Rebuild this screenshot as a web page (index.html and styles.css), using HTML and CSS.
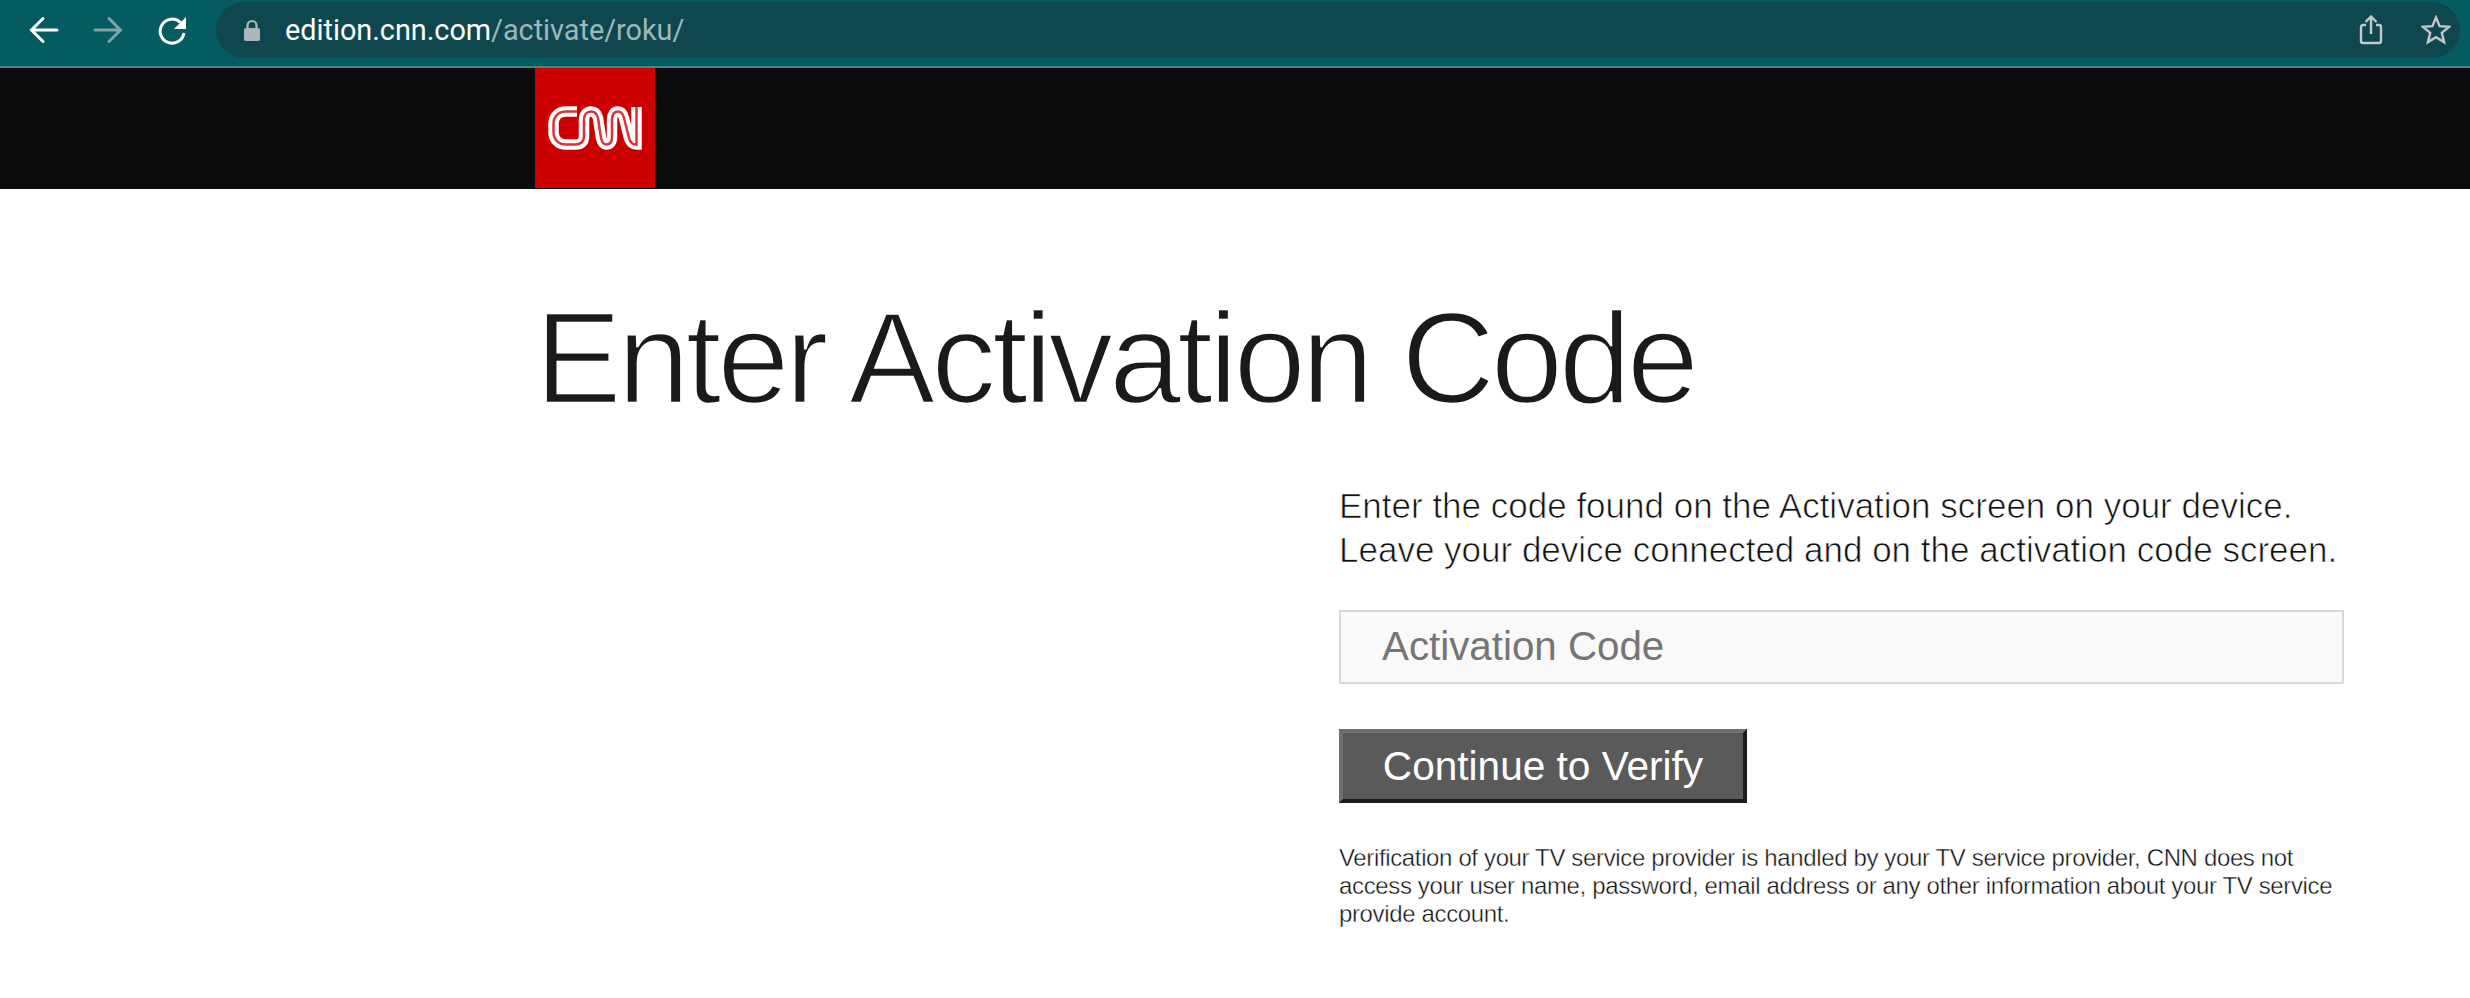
FILE: index.html
```html
<!DOCTYPE html>
<html lang="en">
<head>
<meta charset="utf-8">
<title>Activate</title>
<link rel="stylesheet" href="styles.css">
</head>
<body>
<div class="toolbar">
  <svg class="nav-icon" width="30" height="30" viewBox="0 0 30 30"><path d="M28 15H3.500M14 3.500 2.500 15 14 26.500" fill="none" stroke="#fff" stroke-width="3" stroke-linecap="round"/></svg>
  <svg class="nav-icon" width="30" height="30" viewBox="0 0 30 30"><path d="M2 15h24.500M16 3.500 27.500 15 16 26.500" fill="none" stroke="#7fa5a8" stroke-width="3" stroke-linecap="round"/></svg>
  <svg class="nav-icon" width="30" height="30" viewBox="0 0 30 30"><path d="M23.500 7.500A12 12 0 1 0 27 18" fill="none" stroke="#fff" stroke-width="3"/><path d="M29 2v12H17z" fill="#fff"/></svg>
  <div class="omnibox">
    <svg class="lock" width="18" height="24" viewBox="0 0 18 24"><path d="M4.500 10V7.500a4.500 4.500 0 0 1 9 0V10" fill="none" stroke="#b0b5b8" stroke-width="2.200"/><rect x="1" y="10" width="16" height="13" rx="2" fill="#b0b5b8"/></svg>
    <div class="url"><span class="host">edition.cnn.com</span><span class="path">/activate/roku/</span></div>
    <svg class="share" width="24" height="30" viewBox="0 0 24 30"><path d="M7 10H4a2 2 0 0 0-2 2v14a2 2 0 0 0 2 2h16a2 2 0 0 0 2-2V12a2 2 0 0 0-2-2h-3M12 19V2M6.500 7 12 1.500 17.500 7" fill="none" stroke="#c4c8c9" stroke-width="2.400"/></svg>
    <svg class="star" width="30" height="30" viewBox="0 0 30 30"><path d="M15 2.500l3.600 8.700 9.400.7-7.200 6 2.300 9.200L15 22.200l-8.100 4.900 2.300-9.200-7.200-6 9.400-.7z" fill="none" stroke="#c4c8c9" stroke-width="2.400"/></svg>
  </div>
</div>
<header class="masthead">
  <div class="logo">
    <svg width="94" height="44" viewBox="0 0 94 44" fill="none">
      <path class="cnn-outer" d="M29 5.500H18C10 5.500 5.500 11 5.500 18V26C5.500 33 10 38.500 18 38.500H27C33 38.500 36 36 36 30V14C36 8.500 39 5.500 43 5.500C47 5.500 49 8 50 12L53 32C54 36 55 38.500 58 38.500C62 38.500 64 36 64 31V14C64 8.500 66 5.500 70 5.500C73 5.500 75 8 76 12L81 32C82 36 85 38.500 88.500 38.500V1"/>
      <path class="cnn-inner" d="M29 5.500H18C10 5.500 5.500 11 5.500 18V26C5.500 33 10 38.500 18 38.500H27C33 38.500 36 36 36 30V14C36 8.500 39 5.500 43 5.500C47 5.500 49 8 50 12L53 32C54 36 55 38.500 58 38.500C62 38.500 64 36 64 31V14C64 8.500 66 5.500 70 5.500C73 5.500 75 8 76 12L81 32C82 36 85 38.500 88.500 38.500V1"/>
    </svg>
  </div>
</header>
<main class="page">
  <h1 class="title">Enter Activation Code</h1>
  <section class="panel">
    <p class="lead">Enter the code found on the Activation screen on your device.<br>Leave your device connected and on the activation code screen.</p>
    <input class="code" type="text" placeholder="Activation Code">
    <button class="verify" type="button">Continue to Verify</button>
    <p class="note">Verification of your TV service provider is handled by your TV service provider, CNN does not access your user name, password, email address or any other information about your TV service provide account.</p>
  </section>
</main>
</body>
</html>
```
FILE: styles.css
```css
* { box-sizing: border-box; }
html, body { margin: 0; padding: 0; background: #fff; }
body { width: 2470px; height: 998px; overflow: hidden; font-family: "Liberation Sans", Arial, sans-serif; }
.toolbar { height: 68px; background: #045c60; border-bottom: 2px solid #4a8185; display: flex; align-items: flex-start; padding: 2px 10px 0 29px; }
.nav-icon { flex: none; margin: 13px 34px 0 0; }
.nav-icon:nth-child(3) { margin-right: 29px; }
.omnibox { flex: 1; height: 56px; border-radius: 28px; background: #0f474f; display: flex; align-items: center; padding-left: 27px; padding-right: 9px; }
.lock { flex: none; margin-right: 24px; }
.url { flex: 1; font: 400 28.800px/56px Roboto, sans-serif; white-space: nowrap; }
.host { color: #fff; }
.path { color: #9db8ba; }
.share { flex: none; margin-right: 38px; }
.star { flex: none; }
.masthead { height: 121px; background: #0c0c0c; padding-left: 535px; }
.logo { width: 120px; height: 120px; background: #cc0000; display: flex; align-items: center; justify-content: center; }
.cnn-outer { stroke: #fff; stroke-width: 10.500; }
.cnn-inner { stroke: #d8343a; stroke-width: 2.500; }
.page { padding: 0 0 0 535px; }
.title { margin: 0; padding-top: 104px; height: 295px; font: 400 130px/1 "Liberation Sans", sans-serif; letter-spacing: -4.300px; color: #1a1a1a; -webkit-text-stroke: 2.500px #fff; white-space: nowrap; }
.panel { margin-left: 804px; width: 1010px; }
.lead { margin: 0; font: 400 35px/44px "Liberation Sans", sans-serif; color: #111; -webkit-text-stroke: 0.700px #fff; white-space: nowrap; }
.code { display: block; width: 1005px; height: 74px; margin-top: 38px; padding: 0 0 0 41px; border: 2px solid #d8d8d8; background: #f9f9f9; font: 400 40.300px "Liberation Sans", sans-serif; outline: none; }
.code::placeholder { color: #757575; opacity: 1; }
.verify { display: block; width: 408px; height: 74px; margin-top: 45px; padding: 0; border: 4px solid; border-color: #6f6f6f #1c1c1c #1c1c1c #6f6f6f; background: #5a5a5a; color: #fff; font: 400 40.600px "Liberation Sans", sans-serif; }
.note { margin: 41px 0 0; width: 1005px; font: 400 24px/28px "Liberation Sans", sans-serif; letter-spacing: -0.360px; color: #111; -webkit-text-stroke: 0.400px #fff; }
```
